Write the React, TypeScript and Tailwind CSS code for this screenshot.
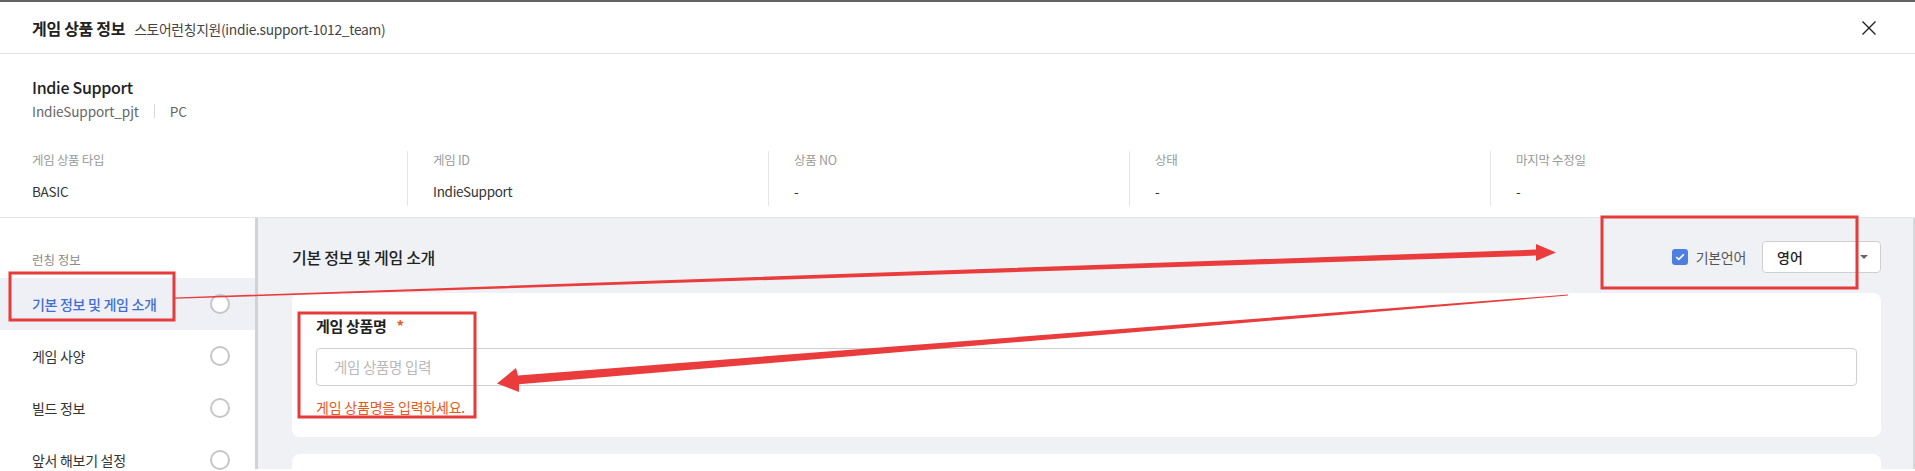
import React from "react";

const info = [
  { label: "게임 상품 타입", value: "BASIC" },
  { label: "게임 ID", value: "IndieSupport" },
  { label: "상품 NO", value: "-" },
  { label: "상태", value: "-" },
  { label: "마지막 수정일", value: "-" },
];

const menu = ["기본 정보 및 게임 소개", "게임 사양", "빌드 정보", "앞서 해보기 설정"];

function Annotations() {
  // red markup drawn on top of the screenshot
  return (
    <svg className="absolute inset-0 pointer-events-none" width="1915" height="471" viewBox="0 0 1915 471">
      <g fill="none" stroke="#e53b3b" strokeWidth="3">
        <rect x="10" y="271" width="164" height="47" />
        <rect x="299" y="311" width="176" height="104" />
        <rect x="1602" y="215" width="255" height="71" />
      </g>
      <g fill="#ea3c3c">
        {/* arrow 1: sidebar -> language select */}
        <polygon points="175,295.4 1536,247.6 1536,242 1556,250.4 1536,259 1536,253.6 175,296.8" />
        {/* arrow 2: select -> input */}
        <polygon points="1568,292.6 518,373.4 516,366 497,381.6 519,390 519,382.2 1568,293.6" />
      </g>
    </svg>
  );
}

export default function App() {
  return (
    <div className="relative w-[1915px] h-[471px] overflow-hidden bg-white border-t-2 border-[#646464] font-['Noto_Sans_CJK_KR','Noto_Sans',sans-serif] text-[#222]">
      {/* modal header */}
      <div className="h-[52px] flex items-center justify-between px-[32px] border-b border-[#e3e3e3]">
        <div className="flex items-baseline gap-[9px]">
          <span className="text-[16px] font-bold tracking-[-0.3px]">게임 상품 정보</span>
          <span className="text-[13.8px] text-[#444] tracking-[-0.3px]">스토어런칭지원(indie.support-1012_team)</span>
        </div>
        <svg width="16" height="16" viewBox="0 0 16 16" className="mr-[6px]">
          <path d="M1.5 1.5 L14.5 14.5 M14.5 1.5 L1.5 14.5" stroke="#222" strokeWidth="1.4" />
        </svg>
      </div>

      {/* product summary */}
      <div className="pl-[32px] pt-[21px] pb-[11px] border-b border-[#e4e5ea]">
        <div className="text-[16px] leading-[24px] font-medium tracking-[-0.3px]">Indie Support</div>
        <div className="flex items-center text-[13.6px] leading-[22px] text-[#666] mt-[1px] tracking-[-0.1px]">
          <span>IndieSupport_pjt</span>
          <span className="w-px h-[14px] bg-[#d6d6d6] mx-[15px]" />
          <span>PC</span>
        </div>
        <div className="flex mt-[29px] h-[55px]">
          {info.map((c, i) => (
            <div key={c.label} className={i === 0 ? "w-[375px]" : "w-[361px] border-l border-[#e6e6e6] pl-[25px]"}>
              <div className="text-[12.5px] leading-[20px] text-[#9a9a9a] -mt-[1px] tracking-[-0.3px]">{c.label}</div>
              <div className="text-[13.5px] leading-[22px] text-[#333] mt-[10px] tracking-[-0.3px]">{c.value}</div>
            </div>
          ))}
        </div>
      </div>

      {/* body */}
      <div className="flex h-[251px]">
        <aside className="w-[258px] shrink-0 bg-white border-r-[3px] border-[#d2d2d2] pt-[32px]">
          <div className="pl-[32px] text-[12.5px] leading-[20px] text-[#8a8a8a] mb-[8px]">런칭 정보</div>
          {menu.map((m, i) => (
            <div
              key={m}
              className={`h-[52px] flex items-center justify-between pl-[32px] pr-[25px] ${i === 0 ? "bg-[#eef0f6]" : ""}`}
            >
              <span className={`text-[14px] tracking-[-0.3px] ${i === 0 ? "text-[#3f6fd1] font-medium" : "text-[#333]"}`}>{m}</span>
              <span className="w-[20px] h-[20px] rounded-full border-2 border-[#c6c6c6] bg-white" />
            </div>
          ))}
        </aside>

        <main className="flex-1 bg-[#f0f1f5] pl-[34px] pr-[32px] border-r-2 border-[#d9d9d9]">
          <div className="flex items-center justify-between pt-[23px] h-[55px] mb-[20px]">
            <span className="text-[16px] font-medium tracking-[-0.3px] text-[#222]">기본 정보 및 게임 소개</span>
            <div className="flex items-center">
              <span className="w-[16px] h-[16px] rounded-[3px] bg-[#4d7fe0] flex items-center justify-center">
                <svg width="10" height="8" viewBox="0 0 10 8">
                  <path d="M1.2 4 L3.8 6.4 L8.8 1.4" stroke="#fff" strokeWidth="1.6" fill="none" />
                </svg>
              </span>
              <span className="ml-[8px] text-[14px] text-[#555] tracking-[-0.3px]">기본언어</span>
              <div className="ml-[16px] w-[119px] h-[32px] bg-white border border-[#cfcfcf] rounded-[4px] flex items-center justify-between pl-[14px] pr-[12px]">
                <span className="text-[14px] font-medium text-[#222]">영어</span>
                <span className="w-0 h-0 border-l-[4px] border-r-[4px] border-t-[4px] border-l-transparent border-r-transparent border-t-[#666]" />
              </div>
            </div>
          </div>

          <section className="bg-white rounded-[8px] px-[24px] pt-[22px] pb-[20px]">
            <div className="flex items-center text-[15px] leading-[22px] font-bold tracking-[-0.3px]">
              게임 상품명 <span className="ml-[10px] text-[#ea5a1e]">*</span>
            </div>
            <div className="mt-[11px] h-[38px] border border-[#cfcfcf] rounded-[4px] flex items-center pl-[17px] text-[14.5px] text-[#b9b9b9] tracking-[-0.3px]">
              게임 상품명 입력
            </div>
            <div className="mt-[11px] text-[14px] leading-[20px] text-[#e8571b] tracking-[-0.2px]">게임 상품명을 입력하세요.</div>
          </section>

          <section className="bg-white rounded-[8px] mt-[17px] h-[80px]" />
        </main>
      </div>

      <Annotations />
    </div>
  );
}
